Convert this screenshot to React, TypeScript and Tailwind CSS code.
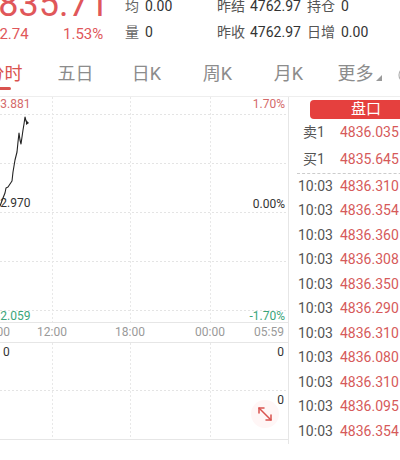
import React from 'react';

const tabs = ['分时', '五日', '日K', '周K', '月K'];

const ticks = [
  '4836.310', '4836.354', '4836.360', '4836.308', '4836.350', '4836.290',
  '4836.310', '4836.080', '4836.310', '4836.095', '4836.354',
];

const linePoints =
  '0,118 10,114 20,109 23,101 25,96 26,91 28,90 30,87 32,84 33,75 35,63 36,59 37,55 38,45 39,36 40,43 41,47 42,40 43,33 44,27 45,20 46,24 47,26';

const GridLines = ({ rows }: { rows: number[] }) => (
  <svg className="absolute inset-0" width="308" height="100%">
    {rows.map((y) => (
      <line key={y} x1="0" x2="308" y1={y + 0.5} y2={y + 0.5} stroke="#e4e4e4" strokeDasharray="2 2" />
    ))}
    {[72, 150, 230].map((x) => (
      <line key={x} x1={x + 0.5} x2={x + 0.5} y1="0" y2="240" stroke="#e8e8e8" strokeDasharray="2 2" />
    ))}
  </svg>
);

export default function App() {
  return (
    <div className="w-[400px] h-[460px] overflow-hidden bg-white text-[#333] font-['Roboto','Noto_Sans_CJK_SC',sans-serif]">
      {/* header quote */}
      <div className="flex h-[52px]">
        <div className="ml-[-22px] w-[147px] shrink-0 flex flex-col">
          <div className="text-[36px] leading-[36px] mt-[-14px] text-[#e0575a]">4835.71</div>
          <div className="flex mt-[3px] text-[15px] leading-[18px] text-[#e0575a]">
            <span className="ml-[13px] w-[72px]">72.74</span>
            <span>1.53%</span>
          </div>
        </div>
        <div className="w-[92px] shrink-0 mt-[-7px] text-[14px] leading-[26px]">
          <div className="flex">
            <span className="w-[20px] text-[#666]">均</span>
            <span>0.00</span>
          </div>
          <div className="flex">
            <span className="w-[20px] text-[#666]">量</span>
            <span>0</span>
          </div>
        </div>
        <div className="shrink-0 mt-[-7px] text-[14px] leading-[26px] whitespace-nowrap">
          <div className="flex">
            <span className="w-[33px] text-[#555]">昨结</span>
            <span className="w-[57px]">4762.97</span>
            <span className="w-[34px] text-[#555]">持仓</span>
            <span>0</span>
          </div>
          <div className="flex">
            <span className="w-[33px] text-[#555]">昨收</span>
            <span className="w-[57px]">4762.97</span>
            <span className="w-[34px] text-[#555]">日增</span>
            <span>0.00</span>
          </div>
        </div>
      </div>

      {/* period tabs */}
      <div className="flex h-[45px] border-b border-[#eeeeee] whitespace-nowrap">
        <div className="ml-[-31px] flex">
          {tabs.map((t, i) => (
            <div key={t} className="w-[71px] shrink-0 flex flex-col pt-[11px]">
              <span className={`text-center text-[18px] leading-[22px] ${i === 0 ? 'text-[#d9534f]' : 'text-[#8c8c8c]'}`}>
                {t}
              </span>
              {i === 0 && <span className="mt-[2px] ml-[20px] w-[22px] h-[3px] bg-[#d9534f] rounded-full" />}
            </div>
          ))}
          <div className="w-[71px] shrink-0 flex justify-center items-start pt-[11px] text-[18px] leading-[22px] text-[#8c8c8c]">
            <span>更多</span>
            <svg width="6" height="6" viewBox="0 0 6 6" className="mt-[12px] ml-[2px]">
              <polygon points="6,0 6,6 0,6" fill="#9a9a9a" />
            </svg>
          </div>
          <div className="w-[40px] shrink-0 pt-[15px] pl-[3px]">
            <svg width="16" height="16" viewBox="0 0 16 16">
              <circle cx="8" cy="8" r="7" fill="none" stroke="#b0b0b0" strokeWidth="1.2" />
            </svg>
          </div>
        </div>
      </div>

      {/* chart + ticks */}
      <div className="flex">
        <div className="ml-[-20px] w-[309px] shrink-0 border-r border-[#e6e6e6]">
          {/* price chart */}
          <div className="relative h-[226px] border-b border-[#e6e6e6] text-[12px] leading-[14px]">
            <GridLines rows={[17, 66, 115, 164, 213]} />
            <svg className="absolute inset-0" width="308" height="225">
              <polyline points={linePoints} fill="none" stroke="#222" strokeWidth="1.1" strokeLinejoin="round" />
              <polygon points="46,23 49,26 46,28" fill="#222" />
            </svg>
            <span className="absolute left-0 top-0 text-[#d46a6a]">4843.881</span>
            <span className="absolute right-[3px] top-0 text-[#d46a6a]">1.70%</span>
            <span className="absolute left-0 top-[99px]">4762.970</span>
            <span className="absolute right-[3px] top-[100px]">0.00%</span>
            <span className="absolute left-0 top-[212px] text-[#3aa57a]">4682.059</span>
            <span className="absolute right-[3px] top-[212px] text-[#3aa57a]">-1.70%</span>
          </div>
          {/* time axis */}
          <div className="relative h-[20px] border-b border-[#e6e6e6] text-[12px] leading-[19px] text-[#9a9a9a]">
            <span className="absolute left-0">06:00</span>
            <span className="absolute left-[72px] -translate-x-1/2">12:00</span>
            <span className="absolute left-[150px] -translate-x-1/2">18:00</span>
            <span className="absolute left-[230px] -translate-x-1/2">00:00</span>
            <span className="absolute right-[4px]">05:59</span>
          </div>
          {/* volume */}
          <div className="relative h-[97px] border-b border-[#e6e6e6] text-[12px] leading-[14px]">
            <GridLines rows={[47]} />
            <span className="absolute left-[23px] top-[2px]">0</span>
            <span className="absolute right-[4px] top-[2px]">0</span>
            <span className="absolute right-[4px] top-[50px]">0</span>
            <div className="absolute left-[271px] top-[57px] w-[28px] h-[28px] rounded-full bg-[#fff6f6] flex items-center justify-center">
              <svg width="16" height="16" viewBox="0 0 16 16" fill="none" stroke="#d9534f" strokeWidth="1.5" strokeLinecap="round" strokeLinejoin="round">
                <line x1="2" y1="2" x2="14" y2="14" />
                <polyline points="2,7 2,2 7,2" />
                <polyline points="9,14 14,14 14,9" />
              </svg>
            </div>
          </div>
        </div>

        {/* order book */}
        <div className="flex-1 flex flex-col text-[14px] whitespace-nowrap">
          <div className="ml-[21px] mt-[3px] w-[112px] h-[19px] shrink-0 rounded-[4px] bg-[#e5403e] text-white text-[15px] leading-[19px] text-center">
            盘口
          </div>
          <div className="flex items-center h-[27px] pl-[14px]">
            <span className="w-[37px] text-[#555]">卖1</span>
            <span className="text-[#d65a5a]">4836.035</span>
          </div>
          <div className="flex items-center h-[27px] pl-[14px]">
            <span className="w-[37px] text-[#555]">买1</span>
            <span className="text-[#d65a5a]">4835.645</span>
          </div>
          <div className="ml-[8px] border-t border-dashed border-[#cccccc]" />
          {ticks.map((p, i) => (
            <div key={i} className="flex items-center h-[24.5px] pl-[9px]">
              <span className="w-[42px] text-[#555]">10:03</span>
              <span className="text-[#d65a5a]">{p}</span>
            </div>
          ))}
        </div>
      </div>
    </div>
  );
}
